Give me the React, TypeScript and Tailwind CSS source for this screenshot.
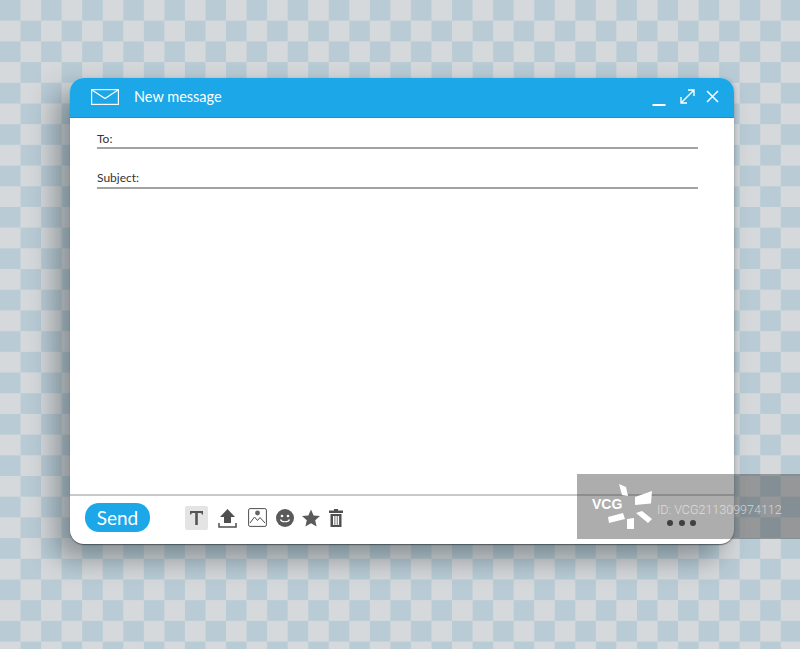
export default function App() {
  return (
    <div className="relative w-[800px] h-[649px] overflow-hidden pt-[78px] pl-[70px] bg-[#d6d9dc] bg-[conic-gradient(#d6d9dc_25%,#b9ccd6_0_50%,#d6d9dc_0_75%,#b9ccd6_0)] bg-[length:41.1px_41.4px] font-['Lato',sans-serif]">
      <div className="flex flex-col w-[664px] h-[466px] rounded-[14px] bg-white overflow-hidden shadow-[-14px_14px_28px_rgba(40,50,55,0.45),0_1px_1px_rgba(40,50,55,0.6),2px_0_3px_rgba(40,50,55,0.12)]">
        <div className="flex items-center h-10 shrink-0 bg-[#1ba7e8] border-b border-[#1595d2] pl-[21px] pr-[15px] text-white">
          <svg width="28" height="16" viewBox="0 0 28 16" fill="none" stroke="white" strokeWidth="1.2" className="-mt-[2px]">
            <rect x="0.6" y="0.6" width="26.8" height="14.8" />
            <path d="M1 1l13 8.5L27 1" />
          </svg>
          <span className="ml-[15px] text-[14.5px] leading-none -mt-[1px]">New message</span>
          <div className="ml-auto flex items-center">
            <svg width="14" height="16" viewBox="0 0 14 16" fill="none" stroke="white" strokeWidth="2" className="mt-[3px]">
              <path d="M0.5 14h13" />
            </svg>
            <svg width="15" height="15" viewBox="0 0 15 15" fill="none" stroke="white" strokeWidth="1.4" className="ml-[14px] -mt-[2px]">
              <path d="M1.500 13.500L13.500 1.500M8 1h6v6M7 14H1V8" />
            </svg>
            <svg width="13" height="13" viewBox="0 0 13 13" fill="none" stroke="white" strokeWidth="1.5" className="ml-[11px] -mt-[2px]">
              <path d="M1 1l11 11M12 1L1 12" />
            </svg>
          </div>
        </div>
        <div className="flex-1 pl-[27px] pr-[36px] pt-[12px] text-[12px] text-[#333]">
          <div className="h-[19px] border-b-2 border-[#a3a3a3] leading-[18px]">To:</div>
          <div className="h-[20px] mt-[20px] border-b-2 border-[#a3a3a3] leading-[18px]">Subject:</div>
        </div>
        <div className="flex items-center h-[50px] shrink-0 border-t-2 border-[#c9c9c9] pl-[15px] pr-[38px] pb-[5px]">
          <div className="flex items-center justify-center w-[65px] h-[29px] rounded-[14px] bg-[#1ba7e8] text-white text-[19px] leading-none">
            Send
          </div>
          <div className="flex items-center justify-center w-[23px] h-[24px] ml-[35px] rounded-[2px] bg-[#e4e4e4]">
            <svg width="15" height="15" viewBox="0 0 15 15" fill="#555">
              <path d="M1 1h13v3.500h-1.200L12.300 3H8.800v12H6.200V3H2.700L2.200 4.500H1z" />
            </svg>
          </div>
          <svg width="19" height="20" viewBox="0 0 19 20" className="ml-[10px]">
            <path d="M9.500 1L17 9h-4v6H6V9H2z" fill="#4f4f4f" />
            <path d="M1 15v4h17v-4" fill="none" stroke="#4f4f4f" strokeWidth="1.500" />
          </svg>
          <svg width="19" height="19" viewBox="0 0 19 19" className="ml-[11px]">
            <rect x="0.600" y="0.600" width="17.800" height="17.800" rx="1.500" fill="white" stroke="#4f4f4f" strokeWidth="1" />
            <circle cx="9.500" cy="5" r="2.400" fill="#666" />
            <path d="M2 15l4.500-6 3 3.500 2.500-3 5 5.500" fill="none" stroke="#4f4f4f" strokeWidth="1" />
          </svg>
          <svg width="18" height="18" viewBox="0 0 18 18" className="ml-[9px]">
            <circle cx="9" cy="9" r="9" fill="#5a5a5a" />
            <circle cx="6" cy="7" r="1.300" fill="white" />
            <circle cx="12" cy="7" r="1.300" fill="white" />
            <path d="M4.500 10.500c1 3 8 3 9 0" fill="none" stroke="white" strokeWidth="1.200" />
          </svg>
          <svg width="18" height="18" viewBox="0 0 18 18" className="ml-[8px]" fill="#5a5a5a">
            <path d="M9 0.500l2.600 5.900 6.400.6-4.800 4.300 1.400 6.300L9 14.300l-5.600 3.300 1.400-6.300L0 7l6.400-.6z" />
          </svg>
          <svg width="14" height="18" viewBox="0 0 14 18" className="ml-[9px]" fill="#4f4f4f">
            <path d="M5 0h4v1.500h5V4H0V1.500h5z" />
            <path d="M1.500 5h11v13h-11zM4 7v9h1.500V7zM6.300 7v9h1.500V7zM8.600 7v9h1.500V7z" fillRule="evenodd" />
          </svg>
          <div className="ml-auto flex gap-[5.500px] mt-[10px]">
            <span className="w-[6px] h-[6px] rounded-full bg-[#444]" />
            <span className="w-[6px] h-[6px] rounded-full bg-[#444]" />
            <span className="w-[6px] h-[6px] rounded-full bg-[#444]" />
          </div>
        </div>
      </div>
      {/* stock photo watermark */}
      <div className="absolute left-[577px] top-[474px] w-[223px] h-[65px] bg-[rgba(60,60,60,0.42)] text-white">
        <span className="absolute left-[15px] top-[23px] text-[14px] leading-none font-bold font-['Liberation_Sans',sans-serif]">VCG</span>
        <svg width="44" height="45" viewBox="0 0 44 45" className="absolute left-[31px] top-[10px]" fill="white">
          <path d="M11 0l7 3 2 9-6-1zM27 13L44 7l-1 12.500L27 21zM28 29l6-2 10 8-4 4zM19 35l7-1v11h-7zM0 33l15-4 2 6-16 4z" />
        </svg>
        <span className="absolute left-[80px] top-[30px] text-[12.500px] leading-none font-light text-white/60 font-['Roboto',sans-serif]">ID: VCG211309974112</span>
      </div>
    </div>
  );
}
